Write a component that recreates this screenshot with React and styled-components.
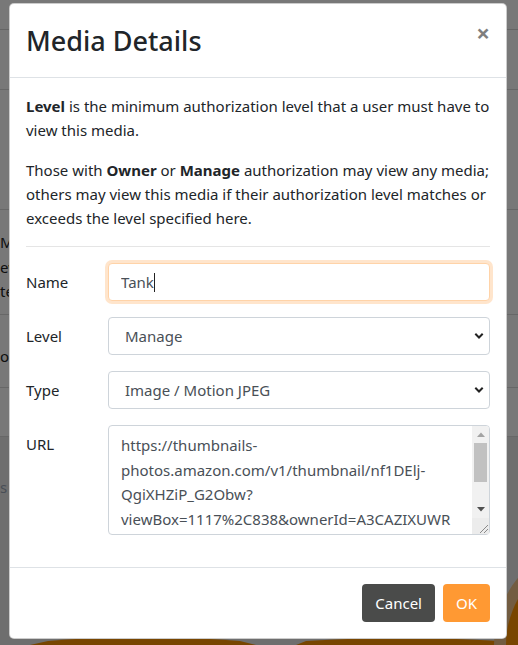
import React from 'react';
import styled, { createGlobalStyle, css } from 'styled-components';

const GlobalStyle = createGlobalStyle`
  html, body { margin: 0; padding: 0; }
  body {
    font-family: "Noto Sans", "Open Sans", sans-serif;
    color: #212529;
    background: #fff;
  }
  * { box-sizing: border-box; }
`;

const Stage = styled.div`
  position: relative;
  width: 518px;
  height: 645px;
  overflow: hidden;
`;

/* ---------- page behind the modal ---------- */
const Page = styled.div`
  height: 100%;
  display: flex;
  flex-direction: column;
  background: #fff;
`;

const PageHeader = styled.header`
  height: 30px;
  flex: none;
  background: #fff;
  border-bottom: 1px solid #d6d6d6;
  display: flex;
  justify-content: center;
  align-items: flex-end;
  gap: 14px;
  overflow: hidden;
`;

const LogoMark = styled.span`
  font-family: "Liberation Sans", sans-serif;
  font-size: 44px;
  line-height: 1;
  margin-bottom: 26px;
  letter-spacing: 4px;
  color: transparent;
  -webkit-text-stroke: 2px #ff9400;
`;

const LogoWord = styled.span`
  font-family: "Liberation Sans", sans-serif;
  font-size: 30px;
  line-height: 1;
  margin-bottom: 27px;
  letter-spacing: 3px;
  color: #ddd;
`;

const PageRow = styled.div`
  height: ${p => p.$h}px;
  flex: none;
  border-bottom: 1px solid #dcdcdc;
  padding-top: ${p => p.$pt || 0}px;
`;

const PageCell = styled.div`
  width: 9px;
  overflow: hidden;
  white-space: nowrap;
  font-size: 15px;
  line-height: 24.5px;
  color: ${p => p.$muted ? '#9aa7b8' : '#222'};
`;

const PageFoot = styled.div`
  flex: 1;
  position: relative;
  background: #eaeaea;
  padding-top: 38px;
`;

const Decor = styled.svg`
  position: absolute;
  left: 0;
  bottom: 0;
`;

const Backdrop = styled.div`
  position: absolute;
  inset: 0;
  background: rgba(0, 0, 0, 0.53);
`;

/* ---------- modal ---------- */
const Dialog = styled.div`
  position: absolute;
  top: 3px;
  left: 9px;
  width: 498px;
  background: #fff;
  border: 1px solid rgba(0, 0, 0, 0.2);
  border-radius: 5px;
  display: flex;
  flex-direction: column;
`;

const Header = styled.div`
  display: flex;
  align-items: flex-start;
  padding: 16px;
  border-bottom: 1px solid #dee2e6;
`;

const Title = styled.h4`
  margin: 0;
  font-size: 27px;
  font-weight: 500;
  line-height: 41px;
  color: #212529;
`;

const Close = styled.button`
  margin: -15px -16px -16px auto;
  padding: 16px;
  background: none;
  border: 0;
  font-family: "Noto Sans", sans-serif;
  font-size: 24px;
  font-weight: 700;
  line-height: 24px;
  color: #000;
  opacity: 0.5;
  text-shadow: 0 1px 0 #fff;
  cursor: pointer;
`;

const Body = styled.div`
  padding: 16px;
`;

const Para = styled.p`
  margin: 0 0 16px;
  font-size: 15px;
  line-height: 24px;
`;

const Divider = styled.hr`
  border: 0;
  border-top: 1px solid rgba(0, 0, 0, 0.1);
  margin: 0 0 16px;
`;

const FieldRow = styled.div`
  display: grid;
  grid-template-columns: 82px 1fr;
  margin-bottom: 16px;
`;

const Label = styled.label`
  padding: 7px 0;
  font-size: 15px;
  line-height: 24px;
`;

const controlBase = css`
  display: block;
  width: 100%;
  font-family: "Noto Sans", sans-serif;
  font-size: 15px;
  line-height: 24px;
  color: #495057;
  background: #fff;
  border: 1px solid #ced4da;
  border-radius: 4px;
  outline: none;
`;

const InputWrap = styled.div`
  position: relative;
`;

const TextInput = styled.input`
  ${controlBase};
  height: 38px;
  padding: 6px 12px;
  ${p => p.$focused && css`
    border-color: #ffd3a8;
    box-shadow: 0 0 0 3px rgba(255, 153, 51, 0.25);
  `}
`;

/* caret drawn over the focused input, after its value */
const CaretLayer = styled.div`
  position: absolute;
  top: 7px;
  left: 13px;
  display: flex;
  align-items: center;
  height: 24px;
  pointer-events: none;
  font-size: 15px;
`;

const Ghost = styled.span`
  visibility: hidden;
  white-space: pre;
`;

const CaretBar = styled.span`
  width: 1px;
  height: 19px;
  background: #222;
`;

const SelectWrap = styled.div`
  position: relative;
`;

const Select = styled.select`
  ${controlBase};
  height: 38px;
  padding: 6px 36px 6px 16px;
  appearance: none;
  -webkit-appearance: none;
`;

const Chevron = styled.svg`
  position: absolute;
  right: 6px;
  top: 50%;
  transform: translateY(-50%);
  pointer-events: none;
`;

const AreaWrap = styled.div`
  position: relative;
`;

const TextArea = styled.textarea`
  ${controlBase};
  height: 110px;
  padding: 7px 29px 6px 12px;
  resize: none;
  overflow: hidden;
  overflow-wrap: break-word;
  line-height: 24.5px;
`;

const ScrollBar = styled.div`
  position: absolute;
  top: 1px;
  right: 1px;
  bottom: 1px;
  width: 17px;
  display: flex;
  flex-direction: column;
  background: #f1f1f1;
  border-radius: 0 3px 3px 0;
`;

const ScrollBtn = styled.div`
  height: 17px;
  flex: none;
  display: flex;
  align-items: center;
  justify-content: center;
`;

const ScrollTrack = styled.div`
  flex: 1;
  padding: 0 2px;
`;

const Thumb = styled.div`
  height: 39px;
  background: #c1c1c1;
`;

const Corner = styled.div`
  height: 16px;
  flex: none;
  display: flex;
  align-items: flex-end;
  justify-content: flex-end;
  background: #ececec;
`;

const Footer = styled.div`
  display: flex;
  justify-content: flex-end;
  align-items: center;
  gap: 8px;
  padding: 16px;
  border-top: 1px solid #dee2e6;
`;

const Button = styled.button`
  height: 38px;
  padding: 6px 12px;
  font-family: "Noto Sans", sans-serif;
  font-size: 15px;
  line-height: 24px;
  color: #fff;
  border: 1px solid transparent;
  border-radius: 4px;
  cursor: pointer;
  background: ${p => (p.$variant === 'primary' ? '#ff9933' : '#4a4b4a')};
`;

const URL_VALUE =
  'https://thumbnails-photos.amazon.com/v1/thumbnail/nf1DElj-QgiXHZiP_G2Obw?viewBox=1117%2C838&ownerId=A3CAZIXUWRHZ9L&groupShareToken=example';

function ChevronIcon() {
  return (
    <Chevron width="10" height="7" viewBox="0 0 10 7">
      <path d="M1.3 1.3 L5 5 L8.7 1.3" fill="none" stroke="#222" strokeWidth="2" />
    </Chevron>
  );
}

export default function App() {
  return (
    <Stage>
      <GlobalStyle />
      <Page>
        <PageHeader>
          <LogoMark>ABET</LogoMark>
          <LogoWord>FUSION</LogoWord>
        </PageHeader>
        <PageRow $h={60} />
        <PageRow $h={120} />
        <PageRow $h={105} $pt={20}>
          <PageCell>Media</PageCell>
          <PageCell>ew</PageCell>
          <PageCell>te</PageCell>
        </PageRow>
        <PageRow $h={73} $pt={29}>
          <PageCell>o</PageCell>
        </PageRow>
        <PageRow $h={49} />
        <PageFoot>
          <PageCell $muted>s</PageCell>
          <Decor width="518" height="150" viewBox="0 0 518 150">
            <path d="M30 150 L48 146 Q140 138 240 146 L256 150 Z" fill="#ff9400" />
            <path d="M296 150 L306 146 Q400 140 500 146 L510 150 Z" fill="#ff9400" />
            <circle cx="600" cy="150" r="100" fill="#ff9400" stroke="#f2c48a" strokeWidth="12" />
          </Decor>
        </PageFoot>
      </Page>
      <Backdrop />
      <Dialog role="dialog">
        <Header>
          <Title>Media Details</Title>
          <Close aria-label="Close">×</Close>
        </Header>
        <Body>
          <Para>
            <strong>Level</strong> is the minimum authorization level that a user must have to view this media.
          </Para>
          <Para>
            Those with <strong>Owner</strong> or <strong>Manage</strong> authorization may view any media; others may
            view this media if their authorization level matches or exceeds the level specified here.
          </Para>
          <Divider />
          <FieldRow>
            <Label>Name</Label>
            <InputWrap>
              <TextInput $focused defaultValue="Tank" />
              <CaretLayer aria-hidden="true">
                <Ghost>Tank</Ghost>
                <CaretBar />
              </CaretLayer>
            </InputWrap>
          </FieldRow>
          <FieldRow>
            <Label>Level</Label>
            <SelectWrap>
              <Select defaultValue="Manage">
                <option>View</option>
                <option>Edit</option>
                <option>Manage</option>
                <option>Owner</option>
              </Select>
              <ChevronIcon />
            </SelectWrap>
          </FieldRow>
          <FieldRow>
            <Label>Type</Label>
            <SelectWrap>
              <Select defaultValue="Image / Motion JPEG">
                <option>Image / Motion JPEG</option>
                <option>Video</option>
              </Select>
              <ChevronIcon />
            </SelectWrap>
          </FieldRow>
          <FieldRow>
            <Label>URL</Label>
            <AreaWrap>
              <TextArea defaultValue={URL_VALUE} />
              <ScrollBar>
                <ScrollBtn>
                  <svg width="8" height="5" viewBox="0 0 8 5">
                    <path d="M0 5 L4 0.5 L8 5 Z" fill="#a3a3a3" />
                  </svg>
                </ScrollBtn>
                <ScrollTrack>
                  <Thumb />
                </ScrollTrack>
                <ScrollBtn>
                  <svg width="8" height="5" viewBox="0 0 8 5">
                    <path d="M0 0 L8 0 L4 4.5 Z" fill="#505050" />
                  </svg>
                </ScrollBtn>
                <Corner>
                  <svg width="12" height="12" viewBox="0 0 12 12">
                    <path d="M11 3 L3 11 M11 7 L7 11" stroke="#8a8a8a" strokeWidth="1" />
                  </svg>
                </Corner>
              </ScrollBar>
            </AreaWrap>
          </FieldRow>
        </Body>
        <Footer>
          <Button>Cancel</Button>
          <Button $variant="primary">OK</Button>
        </Footer>
      </Dialog>
    </Stage>
  );
}
